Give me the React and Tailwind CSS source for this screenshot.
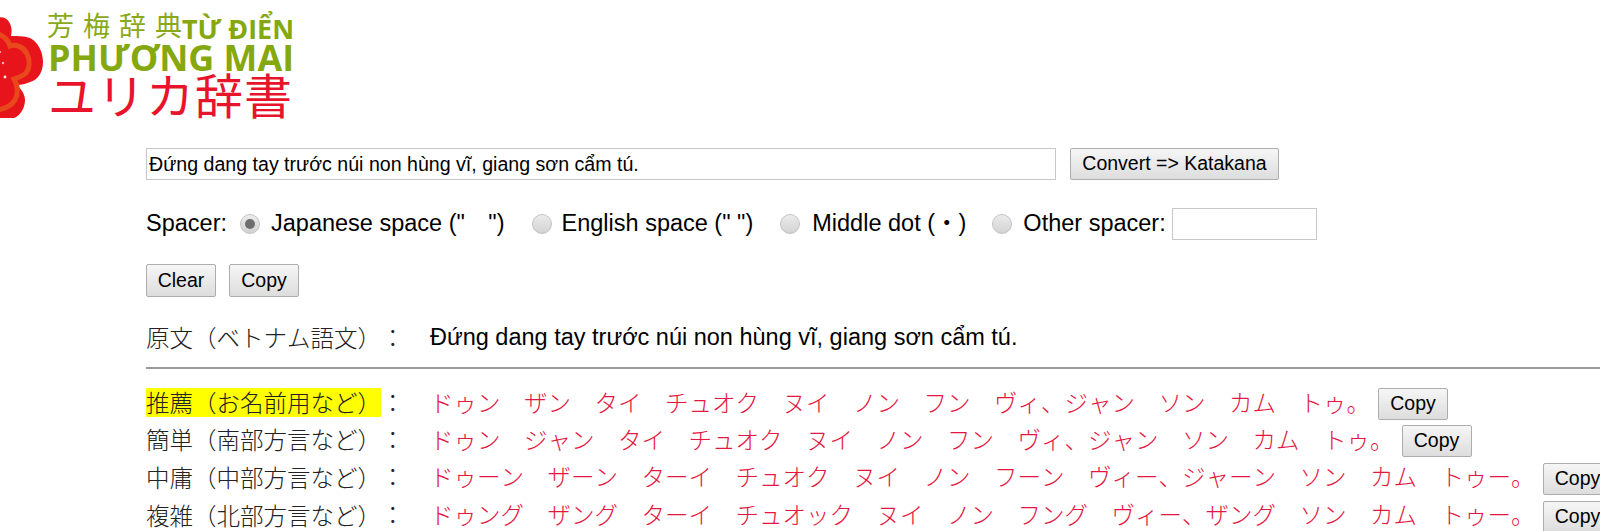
const SANS = "font-['Liberation_Sans','Noto_Sans_CJK_JP',sans-serif]";
const CJK = "font-['Noto_Sans_CJK_JP','Liberation_Serif',serif] font-light [font-kerning:none]";

function Logo() {
  return (
    <svg width="300" height="120" viewBox="0 0 300 120" className="block">
      <path d="M-4 18 C2 16 7 18 9 22 C12 27 12 31 11 36 C17 36 24 36 30 38 C38 42 43 52 43 62 C43 72 38 80 30 82 C26 84 21 85 17 85 C21 89 25 94 25 100 C25 108 20 116 14 118 L-4 118 Z" fill="#e8141c" />
      <path d="M-2 34 C4 36 8 40 10 46 C16 44 24 47 27 54 C30 60 30 68 26 73 C22 77 16 78 14 79 C18 86 18 94 15 100 C11 106 6 108 -2 110" fill="none" stroke="#e8481c" strokeWidth="5" />
      <circle cx="3" cy="63" r="1.2" fill="#fbd" opacity="0.9" />
      <circle cx="0" cy="52" r="1" fill="#fff" opacity="0.8" />
      <circle cx="5" cy="77" r="1.4" fill="#fff" opacity="0.9" />
      <text x="47" y="36" fontSize="27" fill="#8aa91a" textLength="135" lengthAdjust="spacing" fontFamily="'Noto Sans CJK JP',sans-serif" fontWeight="400">芳梅辞典</text>
      <text x="182" y="39" fontSize="27" fill="#84a80d" textLength="112" lengthAdjust="spacingAndGlyphs" fontFamily="'Open Sans',sans-serif" fontWeight="700">TỪ ĐIỂN</text>
      <text x="48" y="71" fontSize="35" fill="#84a80d" textLength="246" lengthAdjust="spacingAndGlyphs" fontFamily="'Open Sans',sans-serif" fontWeight="700">PHƯƠNG MAI</text>
      <text x="48" y="114" fontSize="48" fill="#e8142c" textLength="244" lengthAdjust="spacing" fontFamily="'Noto Sans CJK JP',sans-serif" fontWeight="400">ユリカ辞書</text>
    </svg>
  );
}

function Btn({ children, className = "" }) {
  return (
    <button className={`h-[32px] shrink-0 border border-[#adadad] rounded-[2px] bg-gradient-to-b from-[#f6f6f6] to-[#dddddd] text-[19.5px] text-black ${SANS} ${className}`}>
      {children}
    </button>
  );
}

function Radio({ checked }) {
  return (
    <span className="flex h-[20px] w-[20px] items-center justify-center rounded-full border border-[#c4c4c4] bg-gradient-to-b from-[#ececec] to-[#d2d2d2]">
      {checked && <span className="h-[10px] w-[10px] rounded-full bg-[#6e6e6e]" />}
    </span>
  );
}

const rows = [
  { label: "推薦（お名前用など）", highlight: true, text: "ドゥン　ザン　タイ　チュオク　ヌイ　ノン　フン　ヴィ、ジャン　ソン　カム　トゥ。", h: "h-[37px]" },
  { label: "簡単（南部方言など）", text: "ドゥン　ジャン　タイ　チュオク　ヌイ　ノン　フン　ヴィ、ジャン　ソン　カム　トゥ。", h: "h-[37px]" },
  { label: "中庸（中部方言など）", text: "ドゥーン　ザーン　ターイ　チュオク　ヌイ　ノン　フーン　ヴィー、ジャーン　ソン　カム　トゥー。", h: "h-[38px]" },
  { label: "複雑（北部方言など）", text: "ドゥング　ザング　ターイ　チュオック　ヌイ　ノン　フング　ヴィー、ザング　ソン　カム　トゥー。", h: "h-[38px]" },
];

function Row({ label, text, highlight, h }) {
  return (
    <div className={`flex items-center whitespace-nowrap ${h}`}>
      <span className={`w-[235px] shrink-0 text-[23.5px] leading-[29px] text-[#222] ${CJK} ${highlight ? "bg-[#ffff00]" : ""}`}>{label}</span>
      <span className={`w-[49px] shrink-0 text-[23.5px] text-[#222] ${CJK}`}>：</span>
      <span className={`shrink-0 text-[23.5px] text-[#e4173f] ${CJK}`}>{text}</span>
      <Btn className="ml-[8px] mt-[3px] w-[70px]">Copy</Btn>
    </div>
  );
}

export default function App() {
  return (
    <div className={`h-[531px] w-[1600px] overflow-hidden bg-white text-black ${SANS}`}>
      <Logo />
      <div className="pl-[146px]">
        <div className="mt-[28px] flex gap-[14px]">
          <input readOnly value="Đứng dang tay trước núi non hùng vĩ, giang sơn cẩm tú." className="h-[32px] w-[910px] border border-[#c8c8c8] bg-white px-[2px] text-[19.6px] text-black outline-none" />
          <Btn className="w-[209px]">Convert =&gt; Katakana</Btn>
        </div>
        <div className="mt-[28px] flex h-[32px] items-center whitespace-pre text-[23.5px]">
          <span>Spacer:</span>
          <span className="ml-[13px]"><Radio checked /></span>
          <span className="ml-[11px]">Japanese space ("　")</span>
          <span className="ml-[27px]"><Radio /></span>
          <span className="ml-[10px]">English space (" ")</span>
          <span className="ml-[27px]"><Radio /></span>
          <span className="ml-[12px]">Middle dot (・)</span>
          <span className="ml-[26px]"><Radio /></span>
          <span className="ml-[11px]">Other spacer:</span>
          <input readOnly className="ml-[6px] h-[32px] w-[145px] border border-[#c8c8c8] bg-white outline-none" />
        </div>
        <div className="mt-[24px] flex gap-[13px]">
          <Btn className="h-[33px] w-[70px]">Clear</Btn>
          <Btn className="h-[33px] w-[70px]">Copy</Btn>
        </div>
        <div className="mt-[25px] flex h-[32px] items-center whitespace-nowrap">
          <span className={`w-[235px] shrink-0 text-[23.5px] text-[#222] ${CJK}`}>原文（ベトナム語文）</span>
          <span className={`w-[49px] shrink-0 text-[23.5px] text-[#222] ${CJK}`}>：</span>
          <span className="text-[23.5px]">Đứng dang tay trước núi non hùng vĩ, giang sơn cẩm tú.</span>
        </div>
        <hr className="mt-[13px] border-t-2 border-[#9a9a9a]" />
        <div className="mt-[15px]">
          {rows.map((r) => <Row key={r.label} {...r} />)}
        </div>
      </div>
    </div>
  );
}
